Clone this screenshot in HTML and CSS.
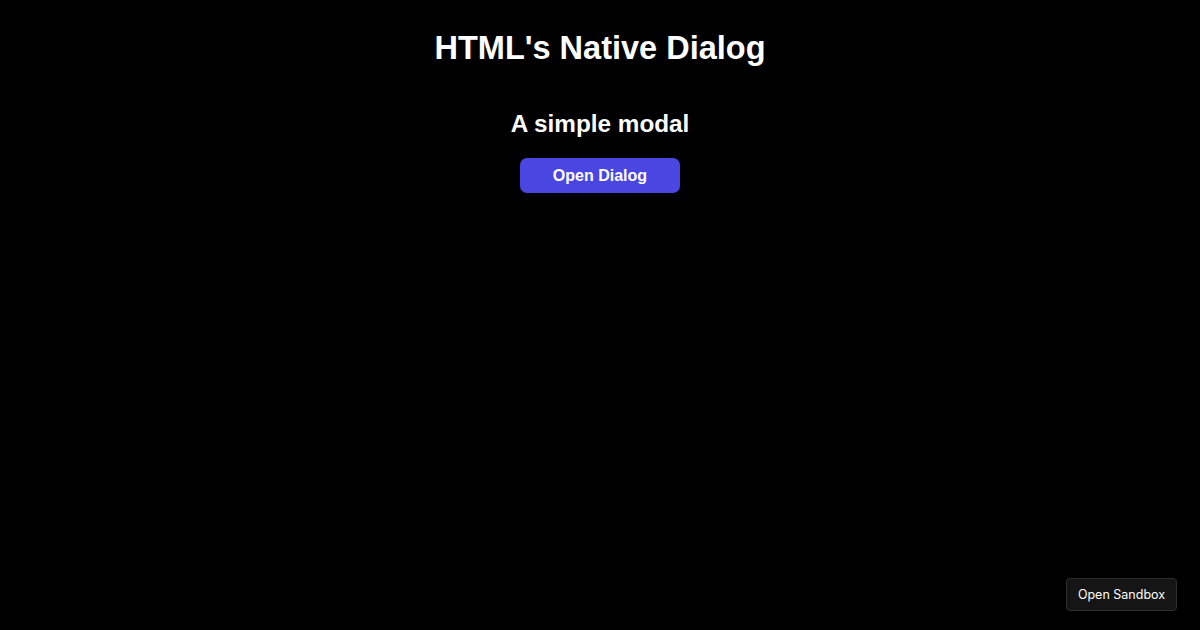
FILE: index.html
```html
<!DOCTYPE html>
<html lang="en">
<head>
<meta charset="utf-8">
<title>HTML's Native Dialog</title>
<link rel="stylesheet" href="styles.css">
</head>
<body>
<main class="page">
  <h1 class="title">HTML's Native Dialog</h1>
  <section class="demo">
    <h2 class="subtitle">A simple modal</h2>
    <button class="open-btn" type="button">Open Dialog</button>
  </section>
</main>
<a class="sandbox-btn" href="#">Open Sandbox</a>
</body>
</html>
```

FILE: styles.css
```css
html, body {
  background: #000;
}
body {
  margin: 8px;
  color: #fff;
  font-family: "Liberation Sans", Arial, sans-serif;
  height: 614px;
  overflow: hidden;
}
.page {
  display: flex;
  flex-direction: column;
  align-items: center;
}
.title {
  font-size: 32.5px;
  font-weight: bold;
  margin: 22px 0 22px;
  line-height: 37px;
}
.demo {
  display: flex;
  flex-direction: column;
  align-items: center;
}
.subtitle {
  font-size: 24.3px;
  font-weight: bold;
  margin: 21px 0 20px;
  line-height: 28px;
}
.open-btn {
  width: 160px;
  height: 35px;
  background: #4a46e1;
  color: #fff;
  border: none;
  border-radius: 7px;
  font-family: "Liberation Sans", Arial, sans-serif;
  font-weight: bold;
  font-size: 16px;
  padding: 0;
  cursor: pointer;
}
.sandbox-btn {
  position: fixed;
  right: 23px;
  bottom: 19px;
  width: 111px;
  height: 33px;
  display: flex;
  align-items: center;
  justify-content: center;
  box-sizing: border-box;
  background: #151515;
  border: 1px solid #2e2e2e;
  border-radius: 4px;
  color: #fff;
  text-decoration: none;
  font-family: Inter, "Liberation Sans", sans-serif;
  font-size: 12.5px;
}
```
